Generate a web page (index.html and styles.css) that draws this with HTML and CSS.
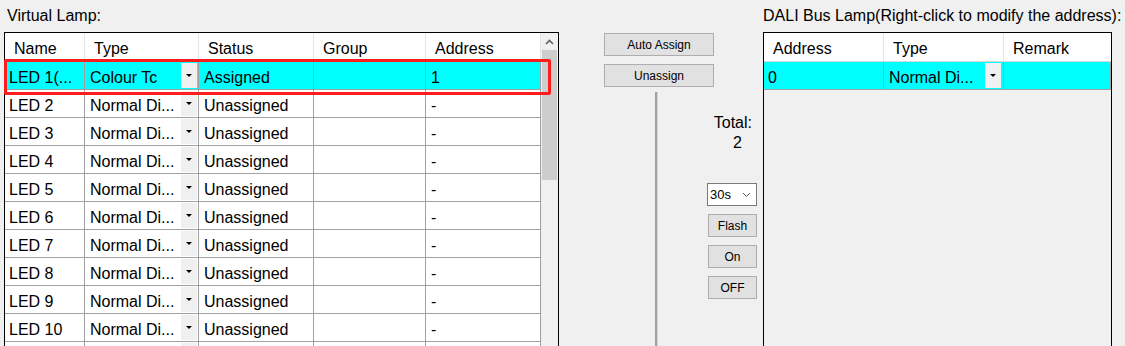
FILE: index.html
```html
<!DOCTYPE html>
<html>
<head>
<meta charset="utf-8">
<link rel="stylesheet" href="styles.css">
</head>
<body>
<div class="page">
  <section class="left">
    <div class="label">Virtual Lamp:</div>
    <div class="grid-box">
      <div class="cols">
        <div class="row head">
          <div class="cell">Name</div><div class="cell">Type</div><div class="cell">Status</div><div class="cell">Group</div><div class="cell">Address</div>
        </div>
        <div class="row sel">
          <div class="cell">LED 1(...</div><div class="cell drop"><span>Colour Tc</span><span class="dd"><i></i></span></div><div class="cell">Assigned</div><div class="cell"></div><div class="cell">1</div>
        </div>
        <div class="row"><div class="cell">LED 2</div><div class="cell drop"><span>Normal Di...</span><span class="dd"><i></i></span></div><div class="cell">Unassigned</div><div class="cell"></div><div class="cell">-</div></div>
        <div class="row"><div class="cell">LED 3</div><div class="cell drop"><span>Normal Di...</span><span class="dd"><i></i></span></div><div class="cell">Unassigned</div><div class="cell"></div><div class="cell">-</div></div>
        <div class="row"><div class="cell">LED 4</div><div class="cell drop"><span>Normal Di...</span><span class="dd"><i></i></span></div><div class="cell">Unassigned</div><div class="cell"></div><div class="cell">-</div></div>
        <div class="row"><div class="cell">LED 5</div><div class="cell drop"><span>Normal Di...</span><span class="dd"><i></i></span></div><div class="cell">Unassigned</div><div class="cell"></div><div class="cell">-</div></div>
        <div class="row"><div class="cell">LED 6</div><div class="cell drop"><span>Normal Di...</span><span class="dd"><i></i></span></div><div class="cell">Unassigned</div><div class="cell"></div><div class="cell">-</div></div>
        <div class="row"><div class="cell">LED 7</div><div class="cell drop"><span>Normal Di...</span><span class="dd"><i></i></span></div><div class="cell">Unassigned</div><div class="cell"></div><div class="cell">-</div></div>
        <div class="row"><div class="cell">LED 8</div><div class="cell drop"><span>Normal Di...</span><span class="dd"><i></i></span></div><div class="cell">Unassigned</div><div class="cell"></div><div class="cell">-</div></div>
        <div class="row"><div class="cell">LED 9</div><div class="cell drop"><span>Normal Di...</span><span class="dd"><i></i></span></div><div class="cell">Unassigned</div><div class="cell"></div><div class="cell">-</div></div>
        <div class="row"><div class="cell">LED 10</div><div class="cell drop"><span>Normal Di...</span><span class="dd"><i></i></span></div><div class="cell">Unassigned</div><div class="cell"></div><div class="cell">-</div></div>
        <div class="row"><div class="cell"></div><div class="cell drop"><span></span><span class="dd"></span></div><div class="cell"></div><div class="cell"></div><div class="cell"></div></div>
      </div>
      <div class="scroll">
        <div class="arrow"><svg width="9" height="6" viewBox="0 0 9 6"><polyline points="1,5 4.5,1.5 8,5" fill="none" stroke="#606060" stroke-width="1.6"/></svg></div>
        <div class="thumb"></div>
      </div>
      <div class="highlight"></div>
    </div>
  </section>

  <section class="mid">
    <div class="mid-btns">
      <div class="btn">Auto Assign</div>
      <div class="btn">Unassign</div>
    </div>
    <div class="mid-lower">
      <div class="splitter"></div>
      <div class="controls">
        <div class="total">Total:</div>
        <div class="count">2</div>
        <div class="select"><span>30s</span><svg width="9" height="6" viewBox="0 0 9 6"><polyline points="1,1 4.5,4.5 8,1" fill="none" stroke="#555" stroke-width="1"/></svg></div>
        <div class="sbtn">Flash</div>
        <div class="sbtn">On</div>
        <div class="sbtn">OFF</div>
      </div>
    </div>
  </section>

  <section class="right">
    <div class="label rlabel">DALI Bus Lamp(Right-click to modify the address):</div>
    <div class="bus-box">
      <div class="brow head">
        <div class="cell">Address</div><div class="cell">Type</div><div class="cell">Remark</div>
      </div>
      <div class="brow sel">
        <div class="cell">0</div><div class="cell drop bdrop"><span>Normal Di...</span><span class="dd"><i></i></span></div><div class="cell"></div>
      </div>
    </div>
  </section>
</div>
</body>
</html>
```

FILE: styles.css
```css
html, body {
  margin: 0;
  padding: 0;
}
body {
  background: #f0f0f0;
  font-family: "Liberation Sans", Arial, sans-serif;
  font-size: 16px;
  color: #000;
  width: 1125px;
  height: 346px;
  overflow: hidden;
}
.page {
  display: flex;
  padding-left: 4px;
  height: 346px;
  box-sizing: border-box;
}
.left {
  width: 555px;
  flex: none;
  display: flex;
  flex-direction: column;
  min-height: 0;
}
.label {
  height: 32px;
  line-height: 32px;
  padding-left: 3px;
  white-space: nowrap;
  flex: none;
}
.grid-box {
  position: relative;
  flex: 1;
  min-height: 0;
  display: flex;
  border: 1px solid #000;
  border-bottom: none;
  background: #fff;
}
.cols {
  width: 536px;
  flex: none;
  overflow: hidden;
}
.row {
  display: grid;
  grid-template-columns: 80px 114px 115px 112px 115px;
  height: 28px;
}
.cell {
  box-sizing: border-box;
  border-right: 1px solid #a0a0a0;
  border-bottom: 1px solid #a0a0a0;
  padding-left: 5px;
  padding-top: 5px;
  white-space: nowrap;
  overflow: hidden;
  display: flex;
  align-items: center;
}
.row.head {
  height: 29px;
}
.head .cell {
  border-right-color: #e5e5e5;
  border-bottom-color: #d8d8d8;
  padding-left: 9px;
  padding-top: 4px;
}
.row .cell:first-child {
  padding-left: 4px;
}
.row.head .cell:first-child {
  padding-left: 9px;
}
.sel .cell {
  background: #00ffff;
}
.drop {
  justify-content: space-between;
  align-items: stretch;
  padding-top: 0;
}
.drop span:first-child {
  display: flex;
  align-items: center;
  padding-top: 5px;
}
.dd {
  width: 16px;
  margin: 1px 1px 1px 0;
  background: #f0f0f0;
  display: flex;
  align-items: center;
  justify-content: center;
}
.dd i {
  width: 0;
  height: 0;
  border-left: 3px solid transparent;
  border-right: 3px solid transparent;
  border-top: 3px solid #000;
}
.scroll {
  width: 17px;
  flex: none;
  background: #f0f0f0;
  display: flex;
  flex-direction: column;
  align-items: center;
}
.arrow {
  height: 17px;
  width: 17px;
  display: flex;
  align-items: center;
  justify-content: center;
}
.thumb {
  width: 15px;
  height: 130px;
  background: #cdcdcd;
}
.highlight {
  position: absolute;
  left: -1px;
  top: 26px;
  width: 547px;
  height: 36px;
  box-sizing: border-box;
  border: 3px solid #ff1c1c;
  border-radius: 2px;
}

.mid {
  width: 204px;
  flex: none;
  padding-top: 33px;
  box-sizing: border-box;
  display: flex;
  flex-direction: column;
}
.mid-btns {
  margin-left: 45px;
  display: flex;
  flex-direction: column;
  gap: 8px;
}
.btn, .sbtn {
  box-sizing: border-box;
  height: 23px;
  background: #e1e1e1;
  border: 1px solid #adadad;
  font-size: 12px;
  display: flex;
  align-items: center;
  justify-content: center;
}
.btn {
  width: 110px;
}
.mid-lower {
  display: flex;
  flex: 1;
  margin-top: 5px;
}
.splitter {
  margin-left: 96px;
  width: 2px;
  background: #a0a0a0;
  border-right: 1px solid #d4d4d4;
}
.controls {
  margin-left: 49px;
  width: 50px;
  display: flex;
  flex-direction: column;
}
.total {
  margin-top: 21px;
  line-height: 20px;
  text-align: right;
  padding-right: 5px;
}
.count {
  line-height: 20px;
  text-align: right;
  padding-right: 15px;
}
.select {
  margin-top: 30px;
  box-sizing: border-box;
  width: 50px;
  height: 23px;
  background: #fff;
  border: 1px solid #7a7a7a;
  font-size: 13px;
  display: flex;
  align-items: center;
  justify-content: space-between;
  padding: 0 5px 0 2px;
}
.sbtn {
  width: 49px;
  margin-left: 1px;
  margin-top: 8px;
  font-size: 12px;
}

.right {
  width: 349px;
  flex: none;
  display: flex;
  flex-direction: column;
}
.rlabel {
  padding-left: 0;
}
.bus-box {
  flex: 1;
  border: 1px solid #000;
  border-bottom: none;
  background: #f0f0f0;
}
.brow {
  display: grid;
  grid-template-columns: 120px 120px 107px;
  height: 28px;
}
.brow.head {
  height: 29px;
  background: #fff;
}
.brow .cell:first-child {
  padding-left: 4px;
}
.brow.head .cell:first-child {
  padding-left: 9px;
}
.brow.head .cell:last-child {
  border-right: none;
}
.bdrop .dd {
  margin-right: 2px;
}
```
